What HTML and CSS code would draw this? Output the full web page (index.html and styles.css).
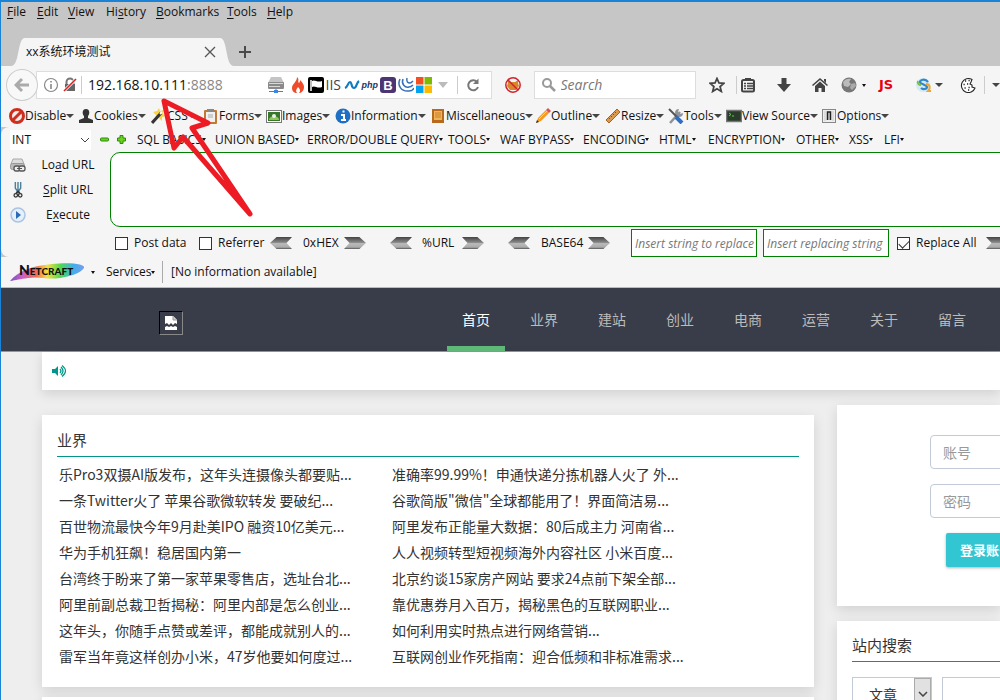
FILE: index.html
```html
<!DOCTYPE html>
<html lang="zh-CN">
<head>
<meta charset="utf-8">
<title>xx系统环境测试</title>
<link rel="stylesheet" href="styles.css">
</head>
<body>
<div class="window">
  <nav class="menubar">
    <button><u>F</u>ile</button><button><u>E</u>dit</button><button><u>V</u>iew</button><button>Hi<u>s</u>tory</button><button><u>B</u>ookmarks</button><button><u>T</u>ools</button><button><u>H</u>elp</button>
  </nav>

  <div class="tabstrip">
    <svg class="curve" viewBox="0 0 14 28"><path d="M0 28C9 28 6 0 14 0V28Z" fill="#f5f5f5"/></svg>
    <div class="tab">
      <span class="tab-title">xx系统环境测试</span>
      <button aria-label="Close tab"><svg width="12" height="12" viewBox="0 0 12 12"><path d="M1 1l10 10M11 1L1 11" stroke="#555" stroke-width="1.3"/></svg></button>
    </div>
    <svg class="curve" viewBox="0 0 14 28"><path d="M14 28C5 28 8 0 0 0V28Z" fill="#f5f5f5"/></svg>
    <button class="newtab" aria-label="New tab"><svg width="12" height="12" viewBox="0 0 12 12"><path d="M6 0v12M0 6h12" stroke="#4a4a4a" stroke-width="2"/></svg></button>
  </div>

  <div class="navbar">
    <button class="back" aria-label="Back"><svg width="16" height="16" viewBox="0 0 16 16"><path d="M8 2L2 8l6 6M3 8h12" fill="none" stroke="#aaa" stroke-width="3"/></svg></button>
    <div class="urlbar">
      <svg class="i16" viewBox="0 0 16 16"><circle cx="8" cy="8" r="6.5" fill="none" stroke="#888" stroke-width="1.2"/><path d="M8 7v5M8 4v1.6" stroke="#888" stroke-width="1.6"/></svg>
      <svg class="i16" viewBox="0 0 16 16"><path d="M4.500 8V5a3.500 3.500 0 0 1 7 0v3" fill="none" stroke="#777" stroke-width="2"/><path d="M3 7h10v7H3z" fill="#666"/><path d="M2 14L14 2" stroke="#fff" stroke-width="3"/><path d="M2 14L14 2" stroke="#d92121" stroke-width="1.600"/></svg>
      <i class="rule"></i>
      <div class="address">192.168.10.111<span>:8888</span></div>
      <div class="badges">
        <svg class="i16 server" viewBox="0 0 16 16"><path d="M3 0h10l3 6H0z" fill="#c4c4c4"/><rect x="0" y="5" width="16" height="7" rx="1" fill="#8a8a8a"/><path d="M1 6.500h14M1 9.500h11" stroke="#d8d8d8"/><path d="M8 12v3M1 14.500h14" stroke="#777"/><path d="M6 13h4v3H6z" fill="#3d83e8"/></svg>
        <svg class="i16" viewBox="0 0 16 16"><path d="M7 0c3 3 0 4 2 6 1-1 1-2 1-3 3 3 4 5 4 7 0 4-3 6-5 6 2-2 1-4-1-6-1 2-3 3-1 6-3 0-5-2-5-5C2 7 7 5 7 0z" fill="#ee4b2b"/></svg>
        <svg class="i16" viewBox="0 0 16 16"><rect width="16" height="16" rx="2" fill="#000"/><path d="M3 3v11" stroke="#fff" stroke-width="1.500"/><path d="M4 4c3-2 5 2 10 0v6c-5 2-7-2-10 0z" fill="#fff"/></svg>
        <span class="iis">IIS</span>
        <svg class="i16" viewBox="0 0 16 16"><path d="M1 11c3-1 3-6 5-6s1 6 4 6 2-5 5-7" fill="none" stroke="#0e7bc2" stroke-width="2.200"/></svg>
        <span class="php">php</span>
        <svg class="i16" viewBox="0 0 16 16"><rect width="16" height="16" rx="3" fill="#4b3573"/><text x="8" y="13" text-anchor="middle" font-family="Liberation Sans" font-weight="bold" font-size="13" fill="#fff">B</text></svg>
        <svg class="i16" viewBox="0 0 16 16"><g fill="none" stroke="#3571b8" stroke-width="1.500"><path d="M2 2c-3 6 1 13 9 12 2 0 4-1 5-3"/><path d="M5 2c-2 5 2 9 6 8 2 0 3-1 4-2"/><path d="M9 1c-1 4 1 5 3 5 1 0 2-1 3-2"/></g></svg>
        <svg class="i16" viewBox="0 0 16 16"><path d="M0 0h7.500v7.500H0z" fill="#f25022"/><path d="M8.500 0H16v7.500H8.500z" fill="#7fba00"/><path d="M0 8.500h7.500V16H0z" fill="#00a4ef"/><path d="M8.500 8.500H16V16H8.500z" fill="#ffb900"/></svg>
        <i class="caret pale"></i>
      </div>
      <i class="rule"></i>
      <button class="reload" aria-label="Reload"><svg class="i16" viewBox="0 0 16 16"><path d="M12 5a5 5 0 1 0 1 5" fill="none" stroke="#777" stroke-width="2"/><path d="M13.500 1.500V7H8z" fill="#777"/></svg></button>
    </div>
    <button class="block" aria-label="Blocker"><svg class="i16" viewBox="0 0 16 16"><path d="M3 6V3l3 2h4l3-2v3l1 3-3 4H5L2 9z" fill="#d9872a"/><circle cx="8" cy="8" r="7.200" fill="none" stroke="#d0202a" stroke-width="1.500"/><path d="M3 3l10 10" stroke="#d0202a" stroke-width="1.500"/></svg></button>
    <label class="search"><svg class="i16" viewBox="0 0 16 16"><circle cx="6" cy="6" r="4" fill="none" stroke="#999" stroke-width="2"/><path d="M9 9l5 5" stroke="#999" stroke-width="2.500"/></svg><input type="text" placeholder="Search" aria-label="Search"></label>
    <div class="actions">
      <svg class="i16" viewBox="0 0 16 16"><path d="M8 1.500l2 4.500 4.800.400-3.700 3.200 1.200 4.800L8 11.800l-4.300 2.600 1.200-4.800L1.200 6.400 6 6z" fill="none" stroke="#444" stroke-width="1.800"/></svg>
      <i class="rule"></i>
      <svg class="i16" viewBox="0 0 16 16"><rect x="2" y="3" width="12" height="11.500" rx="1.500" fill="none" stroke="#444" stroke-width="2"/><path d="M5 1h6v3H5z" fill="#444"/><path d="M4 6.500h2M7 6.500h6M4 9h2M7 9h6M4 11.500h2M7 11.500h6" stroke="#444" stroke-width="1.400"/></svg>
      <svg class="i16" viewBox="0 0 16 16"><path d="M5.500 1h5v6H15l-7 8-7-8h4.500z" fill="#444"/></svg>
      <svg class="i16" viewBox="0 0 16 16"><path d="M8 1l8 7-1 1-7-6-7 6-1-1zM12 2h2v4l-2-2z" fill="#444"/><path d="M3 9l5-4.500L13 9v6H9.500v-4h-3v4H3z" fill="#444"/></svg>
      <svg class="i16" viewBox="0 0 16 16"><circle cx="8" cy="8" r="7.500" fill="#777"/><path d="M2 5c2-3 6-4 8-3l-2 3 2 2-3 3-4-1z" fill="#bbb"/><path d="M10 7l4-1 1 3-4 4-2-2z" fill="#aaa"/></svg>
      <i class="caret tiny"></i>
      <b class="js">JS</b>
      <svg class="i16" viewBox="0 0 16 16"><circle cx="7" cy="8" r="7" fill="#d3eaf3"/><path d="M12 5C9 1 4 3 4 5s7 3 7 5-4 3-6 1" fill="none" stroke="#3387c9" stroke-width="2.200"/><path d="M10 7c4 0 5 4 2 7h3" fill="none" stroke="#e9a63b" stroke-width="2"/><path d="M2 4C1 6 3 8 5 8" fill="none" stroke="#77bd48" stroke-width="2"/></svg>
      <i class="caret"></i>
      <svg class="i16" viewBox="0 0 16 16"><path d="M12 2.500a7 7 0 1 0 3 8.500l-3-1v-2l-2-1 1-2z" fill="#fff" stroke="#222" stroke-width="1.100"/><path d="M5 4h1.200M8.500 3.500h1.200M3.500 7.500h1.200M7 7h1.200M4.500 11h1.200M8.500 10.500h1.200M8 13h1.200" stroke="#222" stroke-width="1.300"/></svg>
      <i class="rule"></i>
      <i class="caret"></i>
    </div>
  </div>

  <div class="devbar">
    <button><svg class="i16" viewBox="0 0 16 16"><circle cx="8" cy="8" r="6.500" fill="#eee" stroke="#cf2e1c" stroke-width="3"/><path d="M3.500 12.500l9-9" stroke="#cf2e1c" stroke-width="3"/></svg>Disable<i class="caret"></i></button>
    <button><svg class="i16" viewBox="0 0 16 16"><path d="M8 1c4 0 4 5 2 7v2l5 2v3H1v-3l5-2V8C4 6 4 1 8 1z" fill="#333"/></svg>Cookies<i class="caret"></i></button>
    <button><svg class="i16" viewBox="0 0 16 16"><path d="M8 0l1 3 4-1-1 4 3 2-4 1 0 4-3-3-4 1 1-4-3-3 4-1z" fill="#f7d44a"/><path d="M1 15L10 5" stroke="#333" stroke-width="3"/><path d="M9 6l2-2" stroke="#fff" stroke-width="2"/></svg>CSS<i class="caret"></i></button>
    <button><svg class="i16" viewBox="0 0 16 16"><rect x="1" y="2" width="13" height="14" rx="1" fill="#c07a35"/><path d="M3 4h9v10H3z" fill="#f0f0f0"/><path d="M4 1h7v3H4z" fill="#888"/><path d="M5 7h5M5 9h5" stroke="#aaa"/></svg>Forms<i class="caret"></i></button>
    <button><svg class="i16" viewBox="0 0 16 16"><rect x=".5" y="2.500" width="15" height="12" fill="#fff" stroke="#777"/><path d="M2 4h12v9H2z" fill="#38762b"/><path d="M3 12c0-5 10-5 10 0z" fill="#8fc65a"/><circle cx="8" cy="8" r="2" fill="#eee"/></svg>Images<i class="caret"></i></button>
    <button><svg class="i16" viewBox="0 0 16 16"><circle cx="8" cy="8" r="7.500" fill="#1f6fc4"/><path d="M6 7h3v5M6 12h5M7.500 3.500h2" fill="none" stroke="#fff" stroke-width="2"/></svg>Information<i class="caret"></i></button>
    <button><svg class="i16" viewBox="0 0 16 16"><rect x="2" y="1" width="12" height="14" fill="#b86a1c"/><path d="M4 3h8v9H4z" fill="#f0b25a"/><path d="M5 5h6M5 7h6M5 9h6" stroke="#c98028"/></svg>Miscellaneous<i class="caret"></i></button>
    <button><svg class="i16" viewBox="0 0 16 16"><path d="M1 15l2-5 8-8 3 3-8 8z" fill="#f29a22"/><path d="M11 2l2-2 3 3-2 2z" fill="#d9515b"/><path d="M1 15l1-3 2 2z" fill="#333"/><path d="M4 11l8-8" stroke="#ffd57a"/></svg>Outline<i class="caret"></i></button>
    <button><svg class="i16" viewBox="0 0 16 16"><path d="M1 12L12 1l3 3L4 15z" fill="#d9984f" stroke="#a8631f"/><path d="M4 10l1 1M6 8l1 1M8 6l1 1M10 4l1 1" stroke="#875016"/></svg>Resize<i class="caret"></i></button>
    <button><svg class="i16" viewBox="0 0 16 16"><path d="M2 15L12 4" stroke="#8d9399" stroke-width="2.500"/><path d="M11 1a4 4 0 1 0 4 4l-3 1-2-2z" fill="#8d9399"/><path d="M1 1l8 8" stroke="#555" stroke-width="2"/><path d="M8 9l6 6" stroke="#2c6fc5" stroke-width="4"/></svg>Tools<i class="caret"></i></button>
    <button><svg class="i16" viewBox="0 0 16 16"><rect x=".5" y="2.500" width="15" height="11" fill="#2b3b2b" stroke="#777" stroke-width="1.500"/><path d="M3 5l2 1.500L3 8M6 8h2" fill="none" stroke="#5fd14e"/></svg>View Source<i class="caret"></i></button>
    <button><svg class="i16" viewBox="0 0 16 16"><rect x="1.500" y="1.500" width="13" height="13" fill="#eee" stroke="#888"/><path d="M4 3v10M12 3v10" stroke="#ccc"/><path d="M6.500 12V4h3v8" fill="#ccc" stroke="#222" stroke-width="1.500"/></svg>Options<i class="caret"></i></button>
  </div>

  <div class="hack-bg">
  <section class="hackbar">
    <div class="payloads">
      <span class="int"><select aria-label="Type"><option>INT</option></select><svg width="10" height="6" viewBox="0 0 10 6"><path d="M1 1l4 4 4-4" fill="none" stroke="#444"/></svg></span>
      <button aria-label="Remove"><svg width="9" height="9" viewBox="0 0 9 9"><rect x=".5" y="3" width="8" height="3" rx="1" fill="#6bd01f" stroke="#2e8b10"/></svg></button>
      <button aria-label="Add"><svg width="9" height="9" viewBox="0 0 9 9"><path d="M3 .5h3V3h2.500v3H6v2.500H3V6H.5V3H3z" fill="#6bd01f" stroke="#2e8b10"/></svg></button>
      <button>SQL BASICS<i class="caret tiny"></i></button><button>UNION BASED<i class="caret tiny"></i></button><button>ERROR/DOUBLE QUERY<i class="caret tiny"></i></button><button>TOOLS<i class="caret tiny"></i></button><button>WAF BYPASS<i class="caret tiny"></i></button><button>ENCODING<i class="caret tiny"></i></button><button>HTML<i class="caret tiny"></i></button><button>ENCRYPTION<i class="caret tiny"></i></button><button>OTHER<i class="caret tiny"></i></button><button>XSS<i class="caret tiny"></i></button><button>LFI<i class="caret tiny"></i></button>
    </div>
    <div class="hack-main">
      <div class="commands">
        <button><svg class="i16" viewBox="0 0 16 16"><path d="M3 2h9l2 5H1z" fill="#ddd" stroke="#aaa"/><rect x=".5" y="6.500" width="14" height="6" rx="2" fill="#bbb" stroke="#999"/><rect x="4" y="9" width="6" height="5" rx="2" fill="#eee" stroke="#555" stroke-width="1.300"/><rect x="9" y="9" width="6" height="5" rx="2" fill="#eee" stroke="#555" stroke-width="1.300"/><path d="M7 11.500h5" stroke="#555"/></svg><span>Lo<u>a</u>d URL</span></button>
        <button><svg class="i16" viewBox="0 0 16 18"><path d="M5 0v7l3 4 3-4V0M8 0v11" fill="none" stroke="#4d819b" stroke-width="1.600"/><path d="M8 10l-2 3M8 10l2 3" stroke="#333" stroke-width="2"/><circle cx="5.500" cy="15" r="2" fill="none" stroke="#333" stroke-width="1.400"/><circle cx="10.500" cy="15" r="2" fill="none" stroke="#333" stroke-width="1.400"/></svg><span><u>S</u>plit URL</span></button>
        <button><svg class="i16" viewBox="0 0 16 16"><circle cx="8" cy="8" r="7" fill="#e6f0fb" stroke="#a9c3e2" stroke-width="1.500"/><path d="M6 4l5 4-5 4z" fill="#2a6cb8"/></svg><span>E<u>x</u>ecute</span></button>
      </div>
      <div class="editor">
        <textarea aria-label="URL"></textarea>
        <div class="encoders">
          <label><input type="checkbox">Post data</label>
          <label><input type="checkbox">Referrer</label>
          <button class="arr left" aria-label="Decode hex"></button><span>0xHEX</span><button class="arr" aria-label="Encode hex"></button>
          <button class="arr left" aria-label="Decode URL"></button><span>%URL</span><button class="arr" aria-label="Encode URL"></button>
          <button class="arr left" aria-label="Decode base64"></button><span>BASE64</span><button class="arr" aria-label="Encode base64"></button>
          <input class="rep" type="text" placeholder="Insert string to replace" aria-label="String to replace">
          <input class="rep" type="text" placeholder="Insert replacing string" aria-label="Replacing string">
          <label><input type="checkbox" checked>Replace All</label>
          <button class="arr" aria-label="Replace"></button>
        </div>
      </div>
    </div>
  </section>
  </div>

  <div class="netcraft">
    <svg width="76" height="20" viewBox="0 0 76 20"><defs><linearGradient id="rb"><stop offset="0" stop-color="#7b50c8"/><stop offset=".18" stop-color="#d060c0"/><stop offset=".35" stop-color="#f06a50"/><stop offset=".5" stop-color="#f5e040"/><stop offset=".68" stop-color="#4fd94f"/><stop offset=".85" stop-color="#3fb0e8"/><stop offset="1" stop-color="#7a9cf0"/></linearGradient></defs><path d="M0 19C8 9 22 4 42 2c18-2 34 0 32 4-4 6-14 8-24 10-14 2-20-2-32 0-8 1-12 2-18 3z" fill="url(#rb)"/><text x="9" y="13" font-family="Lato" font-weight="900" font-size="10" fill="#111"><tspan font-size="14">N</tspan>ETCRAFT</text></svg>
    <i class="caret tiny"></i>
    <button>Services<i class="caret tiny"></i></button>
    <i class="rule"></i>
    <span>[No information available]</span>
  </div>

  <header class="site-header">
    <a class="logo" href="#" aria-label="Logo"><svg width="12" height="14" viewBox="0 0 12 14"><path d="M0 0h8l4 4v4l-2-1-2 2-2-2-2 2-2-2-2 1z" fill="#fff"/><path d="M8 0v4h4" fill="#ccc" stroke="#999"/><path d="M0 11l2-1 2 1 2-1 2 1 2-1 2 1v3H0z" fill="#fff"/></svg></a>
    <nav class="site-nav">
      <a class="active" href="#">首页</a><a href="#">业界</a><a href="#">建站</a><a href="#">创业</a><a href="#">电商</a><a href="#">运营</a><a href="#">关于</a><a href="#">留言</a>
    </nav>
  </header>

  <main class="page">
    <div class="card notice"><svg width="15" height="12" viewBox="0 0 15 12"><path d="M0 4h3l3-3v10L3 8H0z" fill="#009688"/><path d="M8 4q2 2 0 4M9 2q4 4 0 8M10 .5q7 5.500 0 11" fill="none" stroke="#009688" stroke-width="1.200"/></svg></div>
    <div class="columns">
      <div class="primary">
        <section class="card news">
          <h2>业界</h2>
          <div class="lists">
            <ul>
              <li><a href="#">乐Pro3双摄AI版发布，这年头连摄像头都要贴...</a></li>
              <li><a href="#">一条Twitter火了 苹果谷歌微软转发 要破纪...</a></li>
              <li><a href="#">百世物流最快今年9月赴美IPO 融资10亿美元...</a></li>
              <li><a href="#">华为手机狂飙！稳居国内第一</a></li>
              <li><a href="#">台湾终于盼来了第一家苹果零售店，选址台北...</a></li>
              <li><a href="#">阿里前副总裁卫哲揭秘：阿里内部是怎么创业...</a></li>
              <li><a href="#">这年头，你随手点赞或差评，都能成就别人的...</a></li>
              <li><a href="#">雷军当年竟这样创办小米，47岁他要如何度过...</a></li>
            </ul>
            <ul>
              <li><a href="#">准确率99.99%！申通快递分拣机器人火了 外...</a></li>
              <li><a href="#">谷歌简版"微信"全球都能用了！界面简洁易...</a></li>
              <li><a href="#">阿里发布正能量大数据：80后成主力 河南省...</a></li>
              <li><a href="#">人人视频转型短视频海外内容社区 小米百度...</a></li>
              <li><a href="#">北京约谈15家房产网站 要求24点前下架全部...</a></li>
              <li><a href="#">靠优惠券月入百万，揭秘黑色的互联网职业...</a></li>
              <li><a href="#">如何利用实时热点进行网络营销...</a></li>
              <li><a href="#">互联网创业作死指南：迎合低频和非标准需求...</a></li>
            </ul>
          </div>
        </section>
        <section class="card next"></section>
      </div>
      <aside class="secondary">
        <form class="card login">
          <input type="text" placeholder="账号" aria-label="账号">
          <input type="password" placeholder="密码" aria-label="密码">
          <button type="button">登录账号</button>
        </form>
        <section class="card find">
          <h2>站内搜索</h2>
          <div class="find-row">
            <span class="kind"><select aria-label="类型"><option>文章</option></select><i><svg width="10" height="6" viewBox="0 0 10 6"><path d="M1 1l4 4 4-4" fill="none" stroke="#444" stroke-width="1.500"/></svg></i></span>
            <input type="text" aria-label="关键字">
          </div>
        </section>
      </aside>
    </div>
  </main>

  <svg class="pointer" width="100" height="125" viewBox="0 0 100 125"><path d="M9 6L53 28L37 33L95 119L28 42L19 53Z" fill="none" stroke="#ed1c24" stroke-width="5" stroke-linejoin="round"/></svg>
</div>
</body>
</html>
```
FILE: styles.css
```css
* { box-sizing: border-box; }
body {
  margin: 0;
  font: 12px/16px "Open Sans", "Noto Sans CJK SC", sans-serif;
  color: #111;
}
button, select, input, textarea { font: inherit; color: inherit; }
button {
  display: flex;
  align-items: center;
  border: 0;
  padding: 0;
  background: none;
  white-space: nowrap;
}
svg { flex: none; display: block; }
u { text-underline-offset: 2px; }
.i16 { width: 16px; height: 16px; }

.window {
  position: relative;
  height: 100vh;
  overflow: hidden;
  border-top: 2px solid #1883d7;
  border-left: 1px solid #1883d7;
  background: #f5f5f5;
}
.caret {
  flex: none;
  border: 4px solid transparent;
  border-top-color: #444;
  border-bottom: 0;
}
.caret.tiny { border-width: 3px; border-bottom: 0; border-left-width: 2px; border-right-width: 2px; border-top-color: #111; }
.caret.pale { border-width: 6px 5px 0; border-top-color: #bbb; margin-left: 4px; }
.rule { width: 1px; height: 18px; background: #ccc; }

.menubar {
  display: grid;
  grid-template-columns: 30px 31px 38px 50px 71px 40px 40px;
  height: 20px;
  padding-left: 6px;
  background: #c6c6c6;
}
.tabstrip {
  display: flex;
  align-items: flex-end;
  height: 44px;
  padding-left: 10px;
  background: #c6c6c6;
}
.curve { width: 14px; height: 28px; }
.tab {
  display: flex;
  align-items: center;
  justify-content: space-between;
  width: 195px;
  height: 28px;
  padding: 0 4px 0 1px;
  background: #f5f5f5;
}
.newtab { height: 28px; margin-left: 5px; }

.navbar {
  display: flex;
  align-items: center;
  height: 38px;
  padding-left: 5px;
}
.back {
  z-index: 1;
  justify-content: center;
  width: 32px;
  height: 32px;
  border: 1px solid #ccc;
  border-radius: 50%;
  background: #f8f8f8;
}
.urlbar {
  display: flex;
  align-items: center;
  width: 457px;
  height: 28px;
  margin-left: -2px;
  padding: 0 10px 0 6px;
  gap: 3px;
  border: 1px solid #ddd;
  background: #fff;
}
.address { flex: 1; padding-left: 3px; font-size: 14px; }
.address span { color: #888; }
.badges { display: flex; align-items: center; gap: 2px; margin-right: 6px; }
.server { margin-right: 4px; }
.iis { width: 16px; font-size: 14px; color: #444; }
.php { width: 16px; font: italic bold 9px/16px "Liberation Sans", sans-serif; color: #22386b; }
.reload { margin-left: 4px; }
.block { margin: 0 13px; }
.search {
  display: flex;
  align-items: center;
  width: 163px;
  height: 28px;
  padding-left: 6px;
  gap: 4px;
  border: 1px solid #ddd;
  background: #fff;
}
.search input { width: 120px; border: 0; padding: 0; font-size: 14px; font-style: italic; }
.search input::placeholder { color: #777; opacity: 1; }
.actions {
  display: grid;
  grid-template-columns: 27px 4px 36px 36px 29px 21px 17px 37px 19px 25px 24px 8px 8px;
  align-items: center;
  justify-items: start;
  margin-left: 13px;
}
.js { color: #e8000d; font: bold 13px/16px "DejaVu Sans", sans-serif; }

.devbar {
  display: grid;
  grid-template-columns: 69px 73px 52px 63px 69px 95px 105px 70px 63px 58px 95px 80px;
  align-items: center;
  height: 23px;
  padding-left: 8px;
}

.hack-bg { background: #c6c6c6; }
.hackbar {
  height: 130px;
  border-radius: 8px 0 0 8px;
  background: #f5f5f5;
}
.payloads {
  display: grid;
  grid-template-columns: 90px 17px 20px 78px 92px 141px 52px 83px 76px 49px 88px 53px 35px 30px;
  align-items: center;
  height: 25px;
  padding-left: 9px;
}
.int { position: relative; width: 81px; height: 20px; background: #fff; }
.int select { appearance: none; width: 100%; height: 20px; padding: 0 2px; border: 0; background: none; }
.int svg { position: absolute; right: 1px; top: 7px; }
.hack-main { display: flex; }
.commands { display: flex; flex-direction: column; width: 109px; padding-left: 9px; }
.commands button { height: 25px; }
.commands span { width: 84px; text-align: center; }
.editor { flex: 1; min-width: 0; }
textarea {
  display: block;
  width: calc(100% + 20px);
  height: 75px;
  border: 1px solid #008000;
  border-radius: 10px;
  background: #fff;
  resize: none;
}
.encoders {
  display: grid;
  grid-template-columns: 84px 71px 33px 41px 46px 32px 40px 46px 33px 47px 43px 132px 134px 89px 22px;
  align-items: center;
  padding: 2px 0 0 5px;
}
.encoders label { display: flex; align-items: center; gap: 6px; white-space: nowrap; }
.encoders [type="checkbox"] {
  appearance: none;
  width: 13px;
  height: 13px;
  margin: 0;
  border: 1px solid #333;
  background: #fff;
}
.encoders [type="checkbox"]:checked::after {
  content: "";
  display: block;
  width: 9px;
  height: 5px;
  margin: 2px 1px;
  border: solid #333;
  border-width: 0 0 1px 1px;
  transform: rotate(-45deg);
}
.arr {
  width: 22px;
  height: 12px;
  background: linear-gradient(#444, #888 45%, #bbb 55%, #aaa 85%, #555);
  clip-path: polygon(0 0, 70% 0, 100% 50%, 70% 100%, 0 100%, 25% 50%);
}
.arr.left { clip-path: polygon(100% 0, 30% 0, 0 50%, 30% 100%, 100% 100%, 75% 50%); }
.rep { width: 126px; height: 28px; padding: 0 1px 0 3px; border: 1px solid #008000; background: #fff; }
.rep::placeholder { font-style: italic; color: #777; opacity: 1; }

.netcraft {
  display: grid;
  grid-template-columns: 81px 15px 56px 9px 1fr;
  align-items: center;
  justify-items: start;
  height: 31px;
  padding-left: 9px;
  border-bottom: 1px solid #bbb;
}
.netcraft .rule { height: 22px; background: #aaa; }

.site-header {
  display: flex;
  align-items: center;
  height: 64px;
  padding-left: 158px;
  border-bottom: 1px solid #5fb878;
  background: #393d49;
}
.logo {
  display: grid;
  place-items: center;
  width: 24px;
  height: 24px;
  margin-top: 6px;
  border: 1px solid;
  border-color: #000 #888 #888 #000;
}
.site-nav { display: flex; gap: 10px; margin-left: 264px; }
.site-nav a {
  flex: none;
  width: 58px;
  height: 63px;
  border-bottom: 5px solid transparent;
  font-size: 14px;
  line-height: 64px;
  text-align: center;
  text-decoration: none;
  color: #bbb;
}
.site-nav .active { border-color: #5fb878; color: #fff; }

.page {
  padding-left: 41px;
  background: #eee;
  font: 14px/20px "Noto Sans CJK SC", sans-serif;
  color: #333;
}
.card { background: #fff; box-shadow: 0 4px 12px rgba(0, 0, 0, .12); }
.notice { display: flex; align-items: center; height: 38px; padding-left: 10px; }
.columns { display: flex; gap: 23px; }
.primary { flex: none; width: 772px; padding-top: 25px; }
.secondary { flex: 1; min-width: 0; padding-top: 15px; }
.news { padding: 15px; }
h2 {
  margin: 0;
  padding-bottom: 6px;
  border-bottom: 1px solid #009688;
  font-size: 15px;
  font-weight: 400;
  line-height: 20px;
}
.lists { display: grid; grid-template-columns: 333px 1fr; padding: 4px 2px 3px; }
ul { margin: 0; padding: 0; list-style: none; }
li { line-height: 26px; white-space: nowrap; }
li a { color: inherit; text-decoration: none; }
.next { height: 60px; margin-top: 10px; }

.login { display: flex; flex-direction: column; gap: 15px; height: 201px; padding: 30px 0 0 93px; }
.login input { width: 200px; height: 34px; padding: 0 12px; border: 1px solid #c2cad8; border-radius: 4px; }
.login input::placeholder { color: #999; opacity: 1; }
.login button {
  width: 84px;
  height: 34px;
  margin-left: 16px;
  padding: 0 14px;
  border-radius: 2px;
  background: #32c5d2;
  box-shadow: 0 1px 3px rgba(0, 0, 0, .3);
  font-size: 13px;
  font-weight: 700;
  color: #fff;
}
.find { margin-top: 15px; padding: 14px 0 20px 15px; }
.find-row { display: flex; gap: 10px; margin-top: 15px; }
.find-row input { width: 200px; height: 34px; border: 1px solid #c2cad8; }
.kind { position: relative; flex: none; width: 80px; height: 34px; border: 1px solid #c2cad8; }
.kind select { appearance: none; width: 100%; height: 32px; padding: 0 16px; border: 0; background: none; }
.kind i {
  position: absolute;
  inset: 0 0 0 auto;
  display: grid;
  place-items: center;
  width: 17px;
  border: 1px solid #aaa;
  background: #e1e1e1;
  pointer-events: none;
}

.pointer { position: absolute; left: 154px; top: 93px; }
```
